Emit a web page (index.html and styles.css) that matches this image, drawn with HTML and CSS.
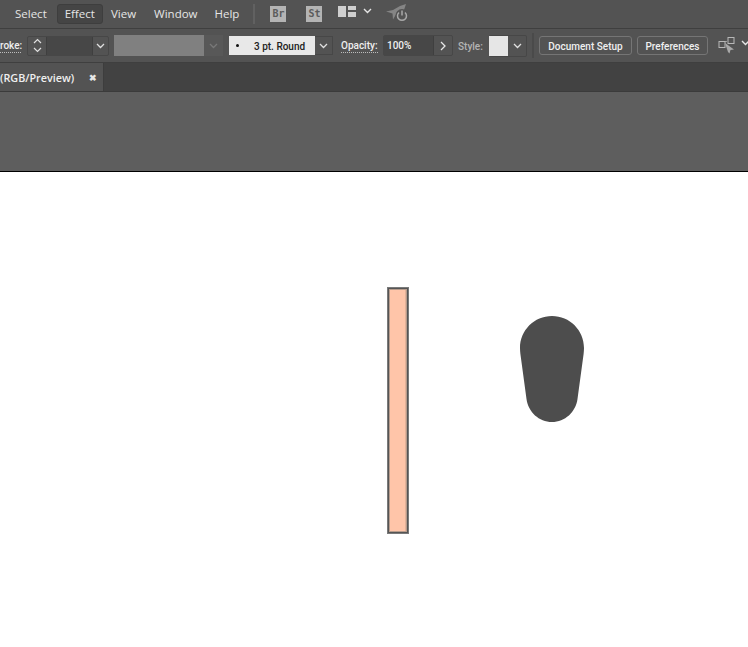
FILE: index.html
```html
<!DOCTYPE html>
<html lang="en">
<head>
  <meta charset="UTF-8">
  <meta name="viewport" content="width=device-width, initial-scale=1.0">
  <title>Illustrator</title>
  <link rel="stylesheet" href="styles.css">
</head>
<body>

  <!-- Menu bar -->
  <div class="menu-bar">
    <span class="menu-item">Select</span>
    <span class="menu-item active">Effect</span>
    <span class="menu-item">View</span>
    <span class="menu-item">Window</span>
    <span class="menu-item">Help</span>
    <div class="menu-sep"></div>
    <div class="app-badge">Br</div>
    <div class="app-badge">St</div>
    <svg class="layout-icon" width="18" height="12" viewBox="0 0 18 12">
      <rect x="0" y="0" width="8" height="11" fill="#cfcfcf"/>
      <rect x="10" y="0" width="8" height="4" fill="#cfcfcf"/>
      <rect x="10" y="6" width="8" height="5" fill="#cfcfcf"/>
    </svg>
    <svg class="chev layout-chev" width="9" height="6" viewBox="0 0 9 6"><path d="M1 1l3.500 3.500L8 1" fill="none" stroke="#e6e6e6" stroke-width="1.400"/></svg>
    <svg class="rocket" width="23" height="18" viewBox="0 0 23 18">
      <path d="M0 7.500L7 6 14 2l6-2-2 6-3 3H11L8.500 13 7 15.500 6.500 9.500z" fill="#858585"/>
      <circle cx="16" cy="11.500" r="6.500" fill="#535353"/>
      <path d="M13 8.500a4.500 4.500 0 1 0 6 0" fill="none" stroke="#a8a8a8" stroke-width="1.500"/>
      <path d="M16 6.500v5" stroke="#a8a8a8" stroke-width="1.500"/>
    </svg>
  </div>

  <!-- Control bar -->
  <div class="control-bar">
    <span class="label dotted stroke-label">roke:</span>
    <div class="stepper">
      <div class="stepper-arrows">
        <svg width="9" height="6" viewBox="0 0 9 6"><path d="M1 5l3.500-3.500L8 5" fill="none" stroke="#e0e0e0" stroke-width="1.200"/></svg>
        <svg width="9" height="6" viewBox="0 0 9 6"><path d="M1 1l3.500 3.500L8 1" fill="none" stroke="#e0e0e0" stroke-width="1.200"/></svg>
      </div>
      <div class="stepper-input"></div>
      <div class="stepper-drop">
        <svg width="9" height="6" viewBox="0 0 9 6"><path d="M1 1l3.500 3.500L8 1" fill="none" stroke="#e0e0e0" stroke-width="1.300"/></svg>
      </div>
    </div>
    <div class="grey-field"></div>
    <div class="grey-drop">
      <svg width="9" height="6" viewBox="0 0 9 6"><path d="M1 1l3.500 3.500L8 1" fill="none" stroke="#787878" stroke-width="1.300"/></svg>
    </div>
    <div class="brush-select">
      <div class="brush-value"><span class="brush-dot"></span>3 pt. Round</div>
      <div class="brush-drop">
        <svg width="9" height="6" viewBox="0 0 9 6"><path d="M1 1l3.500 3.500L8 1" fill="none" stroke="#e0e0e0" stroke-width="1.300"/></svg>
      </div>
    </div>
    <span class="label dotted opacity-label">Opacity:</span>
    <div class="opacity-box">
      <div class="opacity-input">100%</div>
      <div class="opacity-arrow">
        <svg width="6" height="10" viewBox="0 0 6 10"><path d="M1 1l4 4-4 4" fill="none" stroke="#e8e8e8" stroke-width="1.300"/></svg>
      </div>
    </div>
    <span class="label style-label">Style:</span>
    <div class="style-box">
      <div class="style-swatch"></div>
      <div class="style-drop">
        <svg width="9" height="6" viewBox="0 0 9 6"><path d="M1 1l3.500 3.500L8 1" fill="none" stroke="#e0e0e0" stroke-width="1.300"/></svg>
      </div>
    </div>
    <div class="control-sep"></div>
    <button class="ctl-button doc-button">Document Setup</button>
    <button class="ctl-button pref-button">Preferences</button>
    <svg class="transform-icon" width="18" height="17" viewBox="0 0 18 17">
      <path d="M3 4.500h6M3 10.500h3" fill="none" stroke="#9a9a9a"/>
      <rect x="1" y="4.500" width="6" height="6" fill="none" stroke="#b8b8b8"/>
      <rect x="10" y="0.500" width="6" height="6" fill="none" stroke="#b8b8b8"/>
      <path d="M7 6l9 6.500-3.500.5-1 3.500L10 15z" fill="#a8a8a8"/>
    </svg>
    <svg class="chev transform-chev" width="9" height="6" viewBox="0 0 9 6"><path d="M1 1l3.500 3.500L8 1" fill="none" stroke="#e6e6e6" stroke-width="1.400"/></svg>
  </div>

  <!-- Document tabs -->
  <div class="tab-bar">
    <div class="tab">
      <span class="tab-title">(RGB/Preview)</span>
      <span class="tab-close">✖</span>
    </div>
  </div>

  <div class="pasteboard"></div>

  <!-- Artboard -->
  <div class="artboard">
    <div class="bar-shape"></div>
    <svg class="blob-shape" width="64" height="106" viewBox="0 0 64 106">
      <path d="M32 0C49.700 0 64 14.300 64 32C64 34 63.800 36 63.600 38L57.500 83C55.800 96 45 106 32 106C19 106 8.200 96 6.500 83L.4 38C.2 36 0 34 0 32C0 14.300 14.300 0 32 0Z" fill="#4d4d4d"/>
    </svg>
  </div>

</body>
</html>
```

FILE: styles.css
```css
html, body {
  margin: 0;
  padding: 0;
}

body {
  width: 748px;
  height: 647px;
  overflow: hidden;
  background: #fff;
  font-family: 'Open Sans', 'Liberation Sans', sans-serif;
  color: #efefef;
}

/* Menu bar */
.menu-bar {
  height: 28px;
  display: flex;
  align-items: center;
  background: #535353;
  border-bottom: 1px solid #3f3f3f;
  font-size: 11.5px;
}

.menu-item {
  margin-left: 2px;
  padding: 0 7px;
  line-height: 18px;
  border: 1px solid transparent;
  border-radius: 3px;
  color: #e6e6e6;
  white-space: nowrap;
}

.menu-item:first-child {
  margin-left: 7px;
}

.menu-item.active {
  margin-left: 2px;
  background: #454545;
  border-color: #3e3e3e;
}

.menu-item.active + .menu-item {
  margin-left: 0;
}

.menu-item:nth-child(5) {
  margin-left: 1px;
}

.menu-sep {
  width: 2px;
  height: 20px;
  margin-left: 6px;
  background: #616161;
}

.app-badge {
  width: 16px;
  height: 16px;
  margin-left: 15px;
  background: #b4b4b4;
  color: #5c5c5c;
  font-family: 'DejaVu Sans Mono', monospace;
  font-size: 10px;
  font-weight: 700;
  line-height: 16px;
  text-align: center;
}

.app-badge + .app-badge {
  margin-left: 20px;
}

.layout-icon {
  margin-left: 16px;
  margin-bottom: 4px;
}

.layout-chev {
  margin-left: 7px;
  margin-bottom: 6px;
}

.rocket {
  margin-left: 14px;
  margin-bottom: 2px;
}

/* Control bar */
.control-bar {
  height: 33px;
  display: flex;
  align-items: center;
  background: #535353;
  border-bottom: 1px solid #3f3f3f;
  font-family: Roboto, 'Liberation Sans', sans-serif;
  font-size: 10px;
  font-weight: 500;
}

.control-bar > * {
  flex: none;
}

.label {
  white-space: nowrap;
  font-size: 10px;
  padding-top: 1px;
}

.dotted {
  border-bottom: 1px dotted #bcbcbc;
  line-height: 13px;
}

.stroke-label {
  width: 21px;
}

.stepper {
  display: flex;
  width: 80px;
  height: 18px;
  margin-left: 6px;
  border: 1px solid #474747;
  border-radius: 2px;
}

.stepper-arrows {
  width: 18px;
  display: flex;
  flex-direction: column;
  align-items: center;
  justify-content: center;
  gap: 3px;
}

.stepper-input {
  width: 45px;
  background: #474747;
  border-left: 1px solid #3f3f3f;
  border-right: 1px solid #3f3f3f;
}

.stepper-drop, .brush-drop, .style-drop {
  display: flex;
  align-items: center;
  justify-content: center;
  flex: 1;
}

.grey-field {
  width: 90px;
  height: 21px;
  margin-left: 5px;
  background: #808080;
}

.grey-drop {
  display: flex;
  align-items: center;
  justify-content: center;
  width: 19px;
  height: 21px;
  background: #585858;
}

.brush-select {
  display: flex;
  width: 103px;
  height: 19px;
  margin-left: 6px;
  border-right: 1px solid #474747;
}

.brush-value {
  width: 86px;
  display: flex;
  align-items: center;
  padding-top: 1px;
  box-sizing: border-box;
  background: #e8e8e8;
  color: #222;
  white-space: nowrap;
}

.brush-dot {
  width: 3px;
  height: 3px;
  margin: 0 15px 1px 7px;
  border-radius: 50%;
  background: #111;
}

.brush-drop {
  border: 1px solid #474747;
  border-left: none;
  border-right: none;
}

.opacity-label {
  margin-left: 8px;
  width: 37px;
}

.opacity-box {
  display: flex;
  width: 68px;
  height: 19px;
  margin-left: 5px;
  border: 1px solid #474747;
  border-radius: 2px;
}

.opacity-input {
  width: 50px;
  padding-left: 3px;
  box-sizing: border-box;
  background: #474747;
  border-right: 1px solid #3f3f3f;
  line-height: 19px;
}

.opacity-arrow {
  flex: 1;
  display: flex;
  align-items: center;
  justify-content: center;
}

.style-label {
  margin-left: 5px;
  width: 25px;
  color: #b4b4b4;
}

.style-box {
  display: flex;
  width: 37px;
  height: 20px;
  margin-left: 6px;
  border: 1px solid #474747;
  border-left: none;
  border-radius: 2px;
}

.style-swatch {
  width: 19px;
  background: #e6e6e6;
}

.control-sep {
  width: 2px;
  height: 25px;
  margin-left: 5px;
  background: #4a4a4a;
}

.ctl-button {
  height: 19px;
  padding: 1px 0 0;
  margin-left: 5px;
  background: #535353;
  border: 1px solid #757575;
  border-radius: 3px;
  color: #efefef;
  font-family: inherit;
  font-size: inherit;
  font-weight: 500;
  white-space: nowrap;
}

.doc-button {
  width: 93px;
}

.pref-button {
  width: 71px;
}

.transform-icon {
  margin-left: 10px;
}

.transform-chev {
  margin-left: 5px;
  margin-bottom: 6px;
}

/* Document tabs */
.tab-bar {
  height: 28px;
  display: flex;
  background: #424242;
  border-bottom: 1px solid #3b3b3b;
}

.tab {
  width: 103px;
  display: flex;
  align-items: center;
  background: #535353;
  border-right: 1px solid #3d3d3d;
  font-size: 10.800px;
  font-weight: 600;
  color: #efefef;
  white-space: nowrap;
}

.tab-close {
  margin-left: 15px;
  font-size: 9px;
  color: #e6e6e6;
}

.pasteboard {
  height: 79px;
  background: #5e5e5e;
  border-bottom: 1px solid #000;
}

/* Artboard, shapes sit free on the canvas */
.artboard {
  position: relative;
  height: 475px;
  background: #fff;
}

.bar-shape {
  position: absolute;
  left: 387px;
  top: 115px;
  width: 20px;
  height: 245px;
  background: linear-gradient(90deg, #ffc5a9 0, #ffc5a9 17px, #e3b299 17px);
  border: 1px solid #7a7a7a;
  box-shadow: inset 0 0 0 1px #555, inset 0 0 0 2px #b89c8c;
}

.blob-shape {
  position: absolute;
  left: 520px;
  top: 144px;
}
```
